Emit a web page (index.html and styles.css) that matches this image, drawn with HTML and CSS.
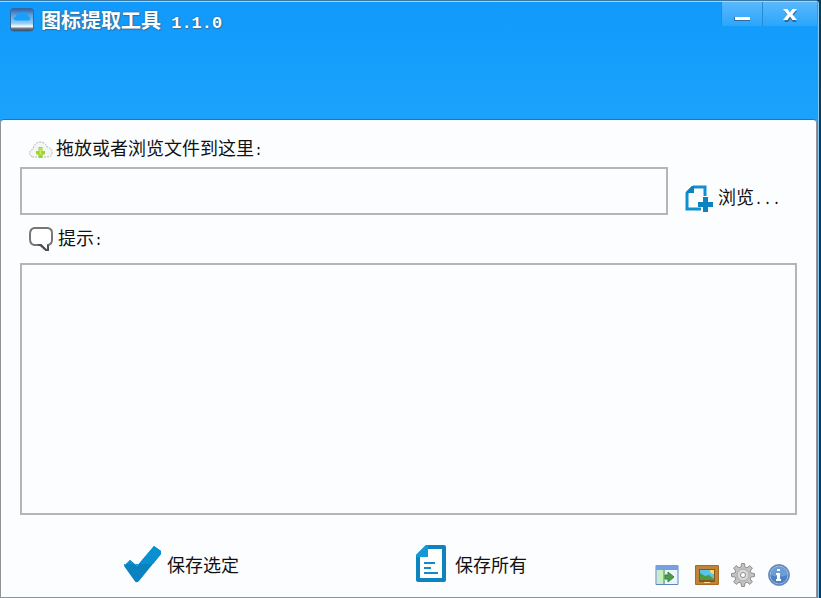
FILE: index.html
```html
<!DOCTYPE html>
<html lang="zh-CN">
<head>
<meta charset="utf-8">
<title>图标提取工具 1.1.0</title>
<link rel="stylesheet" href="styles.css">
</head>
<body>
<div class="window">
  <header class="titlebar">
    <svg class="app-icon" viewBox="0 0 24 24" aria-hidden="true">
      <defs><linearGradient id="app" x1="0" y1="0" x2="0" y2="1"><stop offset="0" stop-color="#2b5fa6"/><stop offset=".3" stop-color="#5aa2e4"/><stop offset=".65" stop-color="#8fcdf2"/><stop offset=".8" stop-color="#f2fbff"/><stop offset=".88" stop-color="#77828e"/><stop offset="1" stop-color="#39404c"/></linearGradient></defs>
      <rect x=".5" y=".5" width="23" height="22.5" rx="3" fill="url(#app)" stroke="#34689f"/>
      <path d="M6 12.500C3 12.500 3 8.500 6 8.500 6 6 8.500 5.500 9.500 6 11 2.500 15 3.500 15.500 6 18 5.500 18.500 7.500 18.500 8.500 21 9 21 12.500 18 12.500Z" fill="#16a0fb"/>
    </svg>
    <h1 class="title">图标提取工具<span class="version"> 1.1.0</span></h1>
    <div class="window-buttons">
      <button class="window-button" type="button" aria-label="最小化">
        <svg viewBox="0 0 20 20"><rect x="2" y="13" width="16" height="4" fill="#35699a"/><rect x="3" y="13" width="15" height="3" fill="#fff"/></svg>
      </button>
      <button class="window-button close" type="button" aria-label="关闭">
        <svg viewBox="0 0 20 20"><path d="M4 5h4l2.500 3L13 5h4l-4.500 5.500L17 16h-4l-2.500-3L8 16H4l4.500-5.500Z" fill="#35699a" transform="translate(0 2)"/><path d="M3 5h4.500l2.500 3.500L12.500 5H17l-4.500 5.500L17 16h-4.500L10 12.500 7.500 16H3l4.500-5.500Z" fill="#fff"/></svg>
      </button>
    </div>
  </header>
  <main class="panel">
    <label class="caption" for="path">
      <svg class="cloud" viewBox="0 0 24 18" aria-hidden="true">
        <path d="M4 16C-1 15 0 9 4 8 5 3 8 1 11 1 15 1 18 4 18 6 24 7 25 14 20 16Z" fill="#f3f6f4" stroke="#b4bab6" stroke-dasharray="2 1"/>
        <path d="M9.500 6h4v4h2.500v3l-2.500 1v3h-4v-3L7 13V10h2.500Z" fill="#9bd331"/><path d="M10.500 7h2v7h-2Z" fill="#c3ea58"/>
      </svg>
      <span>拖放或者浏览文件到这里<span class="half">:</span></span>
    </label>
    <div class="file-row">
      <input class="box path" id="path" type="text">
      <button class="action" type="button">
        <svg class="browse-icon" viewBox="0 0 28 27" aria-hidden="true">
          <path d="M8 2H20V11M16 24H2V8L8 2" fill="none" stroke="#1090cc" stroke-width="3"/>
          <path d="M1 7 7 1h2v7H1ZM18 12h5v5h5v5h-5v5h-5v-5h-5v-5h5Z" fill="#0c83bf"/>
        </svg>
        <span>浏览<span class="half">...</span></span>
      </button>
    </div>
    <label class="caption hint" for="tips">
      <svg class="bubble" viewBox="0 0 26 26" aria-hidden="true">
        <path d="M6 2H20Q24.500 3 24 8V14Q24 18 20 19V24H18L12 19H6Q2 18 2 13V8Q2 3 6 2Z" fill="#fff" stroke="#777" stroke-width="2"/>
        <path d="M10 19h3l5 5h2V19" fill="none" stroke="#505050" stroke-width="2"/>
      </svg>
      <span>提示<span class="half">:</span></span>
    </label>
    <textarea class="box tips" id="tips"></textarea>
    <footer class="footer">
      <button class="action" type="button">
        <svg class="save-icon" viewBox="0 0 38 38" aria-hidden="true">
          <path d="M0 21 6 15 13 21 30 1 37 6V9L15 36Q12 39 10 35Z" fill="#0a82bf"/>
          <path d="M0 21 6 15 13 21 30 1 37 6V9L29 19H0Z" fill="#0a90d0"/>
        </svg>
        <span>保存选定</span>
      </button>
      <button class="action save-all" type="button">
        <svg class="doc-icon" viewBox="0 0 30 38" aria-hidden="true">
          <path d="M10 0H28Q30 0 30 2V35Q30 37 28 37H2Q0 37 0 35V10Z" fill="#0b84bf"/>
          <path d="M12 4H26V33H4V12H12Z" fill="#fff"/><path d="M0 10 10 0h2v12H0Z" fill="#129ad8"/>
          <path d="M8 18h11M8 23h7M8 28h14" stroke="#118bc6" stroke-width="2"/>
        </svg>
        <span>保存所有</span>
      </button>
      <nav class="tools" aria-label="工具">
        <button class="tool exit" type="button" aria-label="退出">
          <svg viewBox="0 0 24 24">
            <path d="M1 2.500h22v19H1Z" fill="#edf3fb" stroke="#5b86c2"/><path d="M1 2h22v5H1Z" fill="#75a1df"/><path d="M2 7h8v14H2Z" fill="#c7edc3"/><path d="M8 7h2v14H8Z" fill="#8bc08b"/>
            <path d="M10 12h3V9l6 5-6 5v-3h-3Z" fill="#4a9d4c" stroke="#39863c"/>
          </svg>
        </button>
        <button class="tool" type="button" aria-label="图片">
          <svg viewBox="0 0 24 24">
            <rect y="2" width="24" height="20" rx="1" fill="#a76b25"/><path d="M1 3h22v18H1Z" fill="#bd843a"/><path d="M4 6h16v13H4Z" fill="#8c551d"/>
            <path d="M5 7h14v10H5Z" fill="#57c4ec"/><path d="M5 10 10 13 14 12 19 16V17H5Z" fill="#4e9941"/><path d="M15 7h4v4Q15 11 15 7Z" fill="#ffdf50"/><path d="M9 19h6v1H9Z" fill="#f7dfa2"/>
          </svg>
        </button>
        <button class="tool" type="button" aria-label="设置">
          <svg viewBox="0 0 24 24">
            <path d="M10.500 0.500h3l.5 3.500 2 .8L18.800 2.600 21.400 5.200 19.200 8l.8 2 3.500.5v3L20 14l-.8 2 2.200 2.800-2.600 2.600L16 19.200l-2 .8-.5 3.500h-3L10 20l-2-.8-2.800 2.200-2.600-2.600L4.800 16 4 14 .5 13.500v-3L4 10l.8-2L2.600 5.200 5.200 2.600 8 4.800 10 4Z" fill="#c3c3c3" stroke="#8e8e8e"/>
            <circle cx="12" cy="12" r="6" fill="#d7d7d7" stroke="#aaa"/><circle cx="12" cy="12" r="2.500" fill="#fff" stroke="#8e8e8e"/>
          </svg>
        </button>
        <button class="tool" type="button" aria-label="关于">
          <svg viewBox="0 0 24 24">
            <circle cx="12" cy="12" r="10.500" fill="#4477b4" stroke="#7892b5"/><circle cx="12" cy="12" r="9" fill="#6c9dd5" stroke="#a0c1e8"/><path d="M3.500 12Q12 15 20.500 12A8.500 8.500 0 0 1 3.500 12Z" fill="#4c82c3"/>
            <path d="M10 6h3v2h-3ZM9 10h4v6h1v2H9v-2h1v-4H9Z" fill="#fff"/>
          </svg>
        </button>
      </nav>
    </footer>
  </main>
</div>
</body>
</html>
```
FILE: styles.css
```css
* {
  box-sizing: border-box;
}

body {
  margin: 0;
  background: #083b5c;
  color: #111;
  font: 18px/24px "Noto Sans CJK SC", sans-serif;
}

button {
  border: 0;
  padding: 0;
  background: none;
  color: inherit;
  font: inherit;
}

svg {
  display: block;
  flex: none;
}

.window {
  display: flex;
  flex-direction: column;
  min-height: 100vh;
  margin-right: 2px;
  padding-right: 1px;
  border-top: 1px solid #3b77a0;
  border-right: 1px solid #8ac9ee;
  border-radius: 0 4px 0 0;
  background: #16a0fb;
}

.titlebar {
  display: flex;
  align-items: flex-start;
  height: 118px;
  padding-left: 10px;
  border-top: 1px solid #9fd6fb;
  background: linear-gradient(#119afb, #1aa2fc);
}

.app-icon {
  width: 24px;
  height: 24px;
  margin-top: 6px;
}

.title {
  flex: 1;
  margin: 6px 0 0 7px;
  color: #fff;
  font-size: 20px;
  font-weight: 700;
  line-height: 24px;
  text-shadow: 0 0 2px #245f91, 1px 1px 1px #3c78a5;
}

.version {
  font-family: "Liberation Mono", monospace;
  font-size: 17px;
}

.window-buttons {
  display: flex;
}

.window-button {
  display: grid;
  place-items: center;
  width: 41px;
  height: 24px;
  border-left: 1px solid #278bd1;
  background: linear-gradient(#59b8fd, #2ba6fb);
}

.window-button svg {
  width: 20px;
  height: 20px;
}

.close {
  width: 55px;
}

.panel {
  display: flex;
  flex: 1;
  flex-direction: column;
  padding: 12px 19px 0;
  border: 1px solid #909499;
  border-top-color: #35719c;
  border-radius: 4px 4px 0 0;
  background: #fcfdff;
}

.caption {
  display: flex;
  align-items: center;
  gap: 3px;
  height: 35px;
  padding-left: 9px;
}

.hint {
  gap: 4px;
  height: 48px;
  padding-left: 8px;
}

.half {
  font-family: "Liberation Mono", monospace;
  font-size: 15px;
}

.cloud {
  width: 24px;
  height: 18px;
}

.bubble {
  width: 26px;
  height: 26px;
}

.box {
  margin: 0;
  padding: 8px;
  border: 2px solid #b4b5b7;
  background: #fcfdff;
  font: inherit;
  outline: 0;
  resize: none;
}

.file-row {
  display: flex;
  gap: 17px;
}

.path {
  flex: 1;
  min-width: 0;
  height: 48px;
}

.action {
  display: flex;
  align-items: center;
  gap: 5px;
  white-space: nowrap;
}

.file-row .action {
  margin-top: 14px;
  margin-right: 16px;
}

.browse-icon {
  width: 28px;
  height: 27px;
}

.tips {
  flex: 1;
  min-height: 100px;
}

.footer {
  display: grid;
  grid-template-columns: 11fr 9fr auto;
  align-items: start;
  height: 82px;
  padding: 30px 0 0 104px;
}

.save-icon {
  width: 38px;
  height: 38px;
}

.doc-icon {
  width: 30px;
  height: 38px;
}

.save-all {
  gap: 9px;
}

.tools {
  display: flex;
  gap: 12px;
  padding: 18px 6px 0 0;
}

.exit {
  margin-right: 4px;
}

.tool svg {
  width: 24px;
  height: 24px;
}
```
